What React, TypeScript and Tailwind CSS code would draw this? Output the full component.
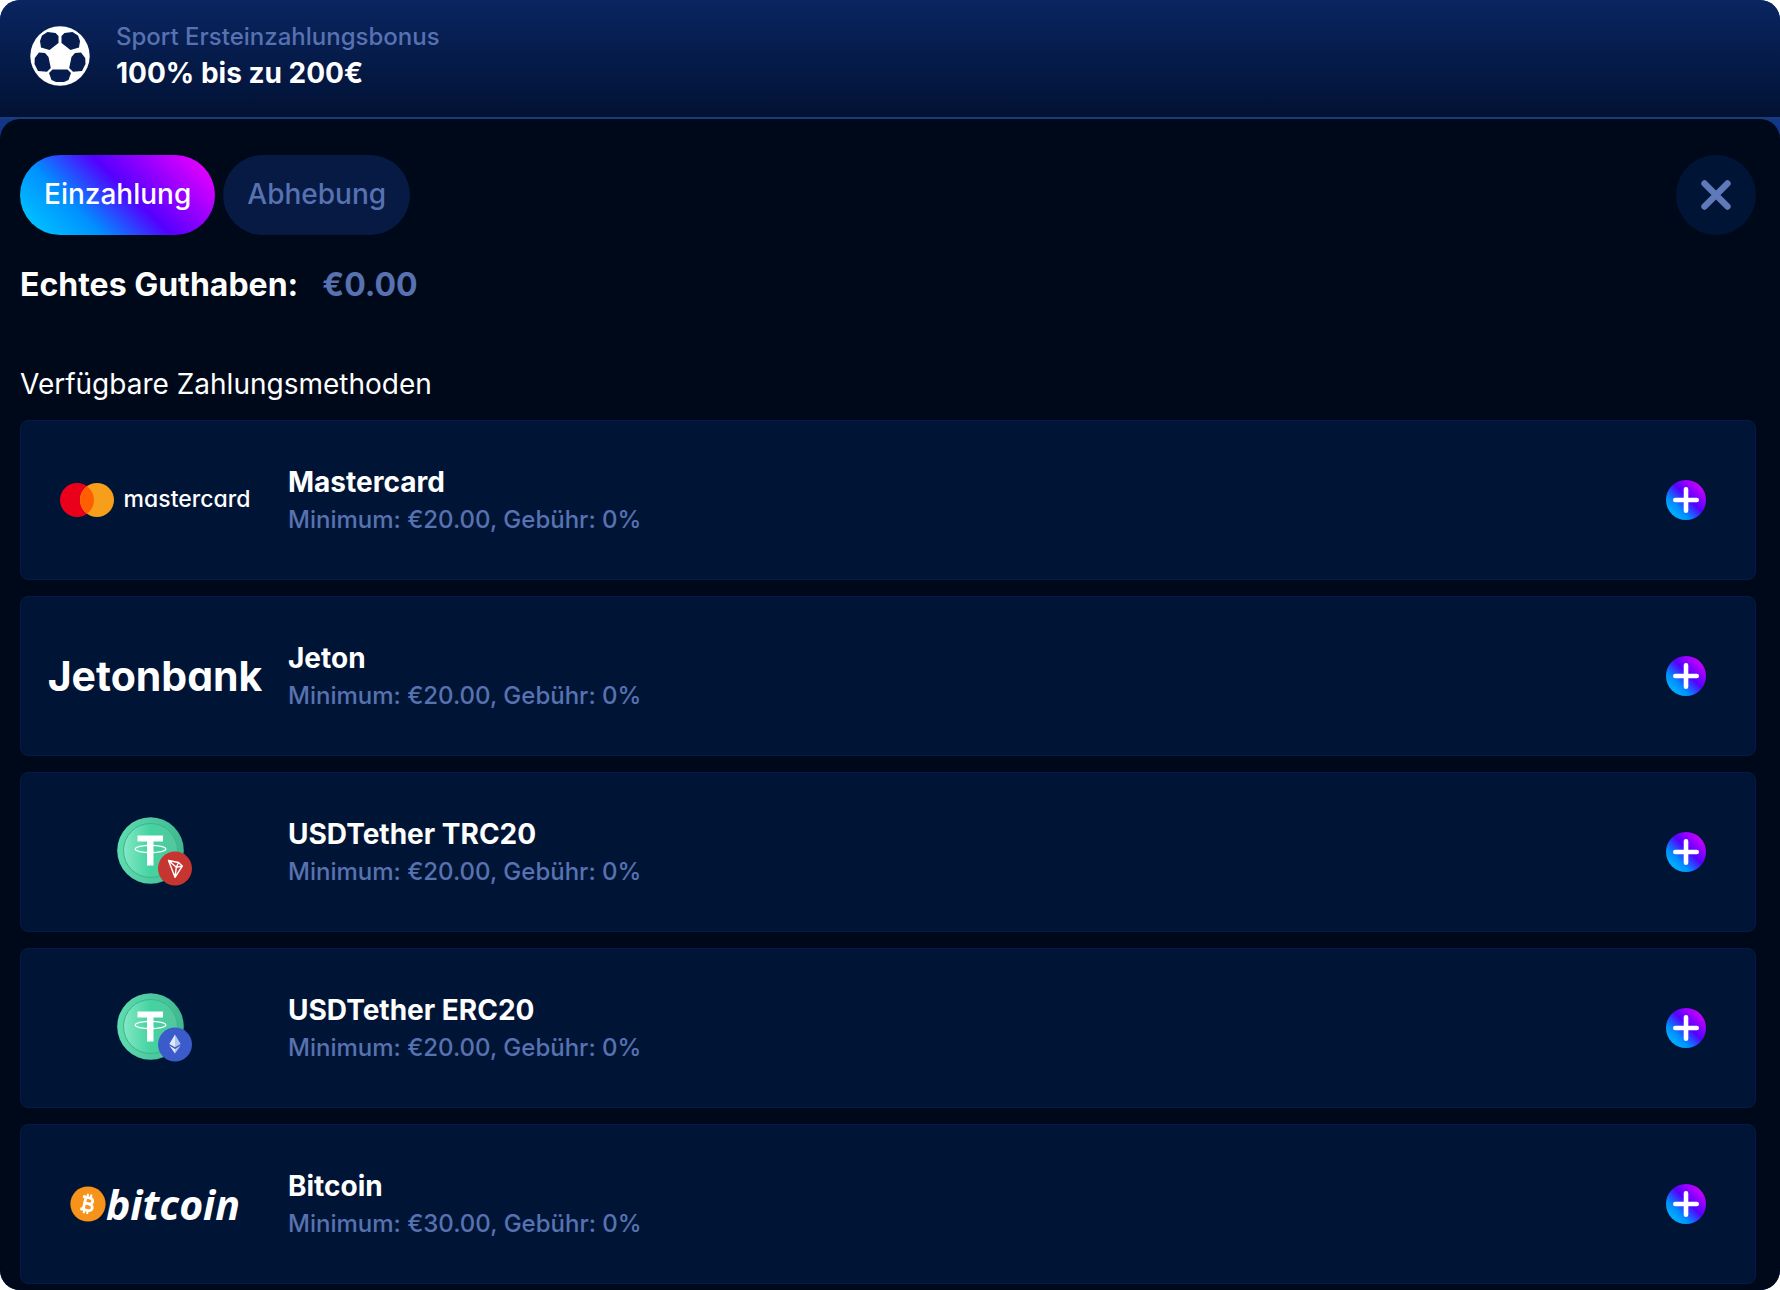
import { memo } from 'react';
import type { ReactNode } from 'react';

interface PaymentMethod {
  name: string;
  minimum: string;
  logo: ReactNode;
}

const SoccerBall = () => (
  <svg viewBox="0 0 60 60" className="w-[60px] h-[60px] shrink-0" aria-hidden="true">
    <circle cx="30" cy="30" r="29.7" fill="#fff" />
    <g fill="#061c4f">
      <path d="M12 9.5 L17.5 6 L25.5 7 L28.5 10 V17 L19.5 24 L11 21.5 L10 15 Z" />
      <path d="M48 9.5 L42.5 6 L34.5 7 L31.5 10 V17 L40.5 24 L49 21.5 L50 15 Z" />
      <path d="M9 26.5 L15 27 L18.5 31 L20.8 42 L17 45.8 L8 45 L4.5 38 L4.8 32 Z" />
      <path d="M51 26.5 L45 27 L41.5 31 L39.2 42 L43 45.8 L52 45 L55.5 38 L55.2 32 Z" />
      <path d="M22.5 43.5 H37.5 L41 47 L38.5 54 L34 56 H26 L21.5 54 L19 47 Z" />
    </g>
  </svg>
);

const MastercardLogo = () => (
  <div className="flex items-center gap-[10px]">
    <svg viewBox="0 0 54 34" className="w-[54px] h-[34px]" aria-hidden="true">
      <circle cx="17" cy="17" r="17" fill="#eb001b" />
      <circle cx="37" cy="17" r="17" fill="#f79e1b" />
      <path d="M27 3.25 A17 17 0 0 1 27 30.75 A17 17 0 0 1 27 3.25 Z" fill="#ff5f00" />
    </svg>
    <span className="pb-[2px] text-[23px] leading-8 font-medium text-white [font-feature-settings:'cv11']">mastercard</span>
  </div>
);

const JetonbankLogo = () => (
  <span className="text-[41px] leading-[48px] font-bold text-white [font-feature-settings:'cv11']">Jetonbank</span>
);

const TetherLogo = ({ id, children }: { id: string; children: ReactNode }) => (
  <svg viewBox="0 0 76 70" className="w-[76px] h-[70px]" aria-hidden="true">
    <defs>
      <linearGradient id={`${id}-rim`} x1="0" y1="0" x2="1" y2="0">
        <stop offset="0" stopColor="#5fdcb0" />
        <stop offset="1" stopColor="#3fb890" />
      </linearGradient>
      <linearGradient id={`${id}-face`} x1="0" y1="0" x2="1" y2="0">
        <stop offset="0" stopColor="#84e8c6" />
        <stop offset="0.5" stopColor="#43d3a0" />
        <stop offset="1" stopColor="#54c69f" />
      </linearGradient>
    </defs>
    <circle cx="33.5" cy="33.5" r="33.3" fill={`url(#${id}-rim)`} />
    <circle cx="33.5" cy="33.5" r="27" fill={`url(#${id}-face)`} stroke="#3fb38b" />
    <path d="M20.5 18.5 H46 V24.5 H36.5 V48.5 H30 V24.5 H20.5 Z" fill="#fff" />
    <ellipse cx="33.5" cy="32" rx="15.3" ry="3.6" fill="none" stroke="#fff" strokeWidth="1.3" />
    {children}
  </svg>
);

const TronBadge = () => (
  <>
    <circle cx="58" cy="51.5" r="17" fill="#c63530" />
    <path d="M51.5 43.5 L61.5 45.5 L65.3 49 L58 60.3 Z M51.5 43.5 L59.3 50.3 L58 60.3 M59.3 50.3 L65.3 49 M59.3 50.3 L61.5 45.5" fill="none" stroke="#fff" strokeWidth="1.4" strokeLinejoin="round" />
  </>
);

const EthereumBadge = () => (
  <>
    <circle cx="58" cy="51.5" r="17" fill="#3a5bc9" />
    <path d="M58 41.5 L52.3 51 L58 54.2 Z" fill="#e2e8fa" />
    <path d="M58 41.5 L63.7 51 L58 54.2 Z" fill="#b3c1ed" />
    <path d="M52.3 52.5 L58 60.5 V56 Z" fill="#e2e8fa" />
    <path d="M63.7 52.5 L58 60.5 V56 Z" fill="#b3c1ed" />
  </>
);

const BitcoinLogo = () => (
  <div className="flex items-center">
    <svg viewBox="0 0 36 36" className="w-[36px] h-[36px]" aria-hidden="true">
      <circle cx="18" cy="18" r="17.6" fill="#f7931a" />
      <g transform="rotate(13 18 18)" fill="none" stroke="#fff">
        <path d="M14.5 11.7 V24.3 M11.5 11.7 H19 a3 3 0 0 1 0 6 H14.5 M19 17.9 h0.8 a3.2 3.2 0 0 1 0 6.4 H11.5" strokeWidth="2.8" />
        <path d="M15.8 8 V12 M19.3 8 V12 M15.8 24 V28 M19.3 24 V28" strokeWidth="2" />
      </g>
    </svg>
    <span className="font-['Open_Sans',sans-serif] text-[41px] leading-[48px] font-bold italic text-white">bitcoin</span>
  </div>
);

const methods: PaymentMethod[] = [
  { name: 'Mastercard', minimum: '€20.00', logo: <MastercardLogo /> },
  { name: 'Jeton', minimum: '€20.00', logo: <JetonbankLogo /> },
  { name: 'USDTether TRC20', minimum: '€20.00', logo: <TetherLogo id="trc"><TronBadge /></TetherLogo> },
  { name: 'USDTether ERC20', minimum: '€20.00', logo: <TetherLogo id="erc"><EthereumBadge /></TetherLogo> },
  { name: 'Bitcoin', minimum: '€30.00', logo: <BitcoinLogo /> },
];

const PaymentCard = memo(({ method }: { method: PaymentMethod }) => (
  <li className="flex items-center h-40 pl-[25px] pr-[49px] rounded-lg border border-[#04194a] bg-[#001536]">
    <div className="flex justify-center w-[218px] shrink-0">{method.logo}</div>
    <div className="flex-1 ml-6 pt-[2px]">
      <h3 className="text-[28px] leading-[38px] font-bold text-white">{method.name}</h3>
      <p className="text-[24px] leading-[38px] font-medium text-[#5872b1]">Minimum: {method.minimum}, Gebühr: 0%</p>
    </div>
    <button
      type="button"
      aria-label={`${method.name} hinzufügen`}
      className="flex items-center justify-center w-10 h-10 rounded-full bg-[linear-gradient(45deg,#00d0ff_0%,#0090ff_30%,#5400ff_55%,#ff00ff_100%)]"
    >
      <svg viewBox="0 0 40 40" className="w-10 h-10" aria-hidden="true">
        <path d="M20 9.3 V30.7 M9.3 20 H30.7" stroke="#fff" strokeWidth="4.6" strokeLinecap="round" />
      </svg>
    </button>
  </li>
));

PaymentCard.displayName = 'PaymentCard';

export default function App() {
  return (
    <div className="overflow-hidden rounded-[20px] bg-[#12378a] font-['Inter',sans-serif]">
      <header className="flex items-start pt-[19px] pb-[26px] pl-[30px] border-b-2 border-[#1c3b78] bg-linear-to-b from-[#0a2561] to-[#021234]">
        <div className="pt-[7px]">
          <SoccerBall />
        </div>
        <div className="ml-[26px]">
          <p className="text-[24px] leading-9 font-medium text-[#5872b1]">Sport Ersteinzahlungsbonus</p>
          <p className="text-[28px] leading-9 font-bold text-white">100% bis zu 200€</p>
        </div>
      </header>

      <main className="pt-9 pb-[6px] pl-5 pr-6 rounded-t-[20px] bg-[#00091a]">
        <div className="flex items-center gap-2">
          <button
            type="button"
            className="h-20 px-6 pb-[2px] rounded-full text-[28px] font-medium text-white bg-[linear-gradient(45deg,#00d0ff_0%,#0090ff_30%,#5400ff_55%,#ff00ff_100%)]"
          >
            Einzahlung
          </button>
          <button type="button" className="h-20 px-6 pb-[2px] rounded-full text-[28px] font-medium text-[#5872b1] bg-[#061a44]">
            Abhebung
          </button>
          <button
            type="button"
            aria-label="Schließen"
            className="flex items-center justify-center w-20 h-20 ml-auto rounded-full bg-[#001536]"
          >
            <svg viewBox="0 0 32 32" className="w-8 h-8" aria-hidden="true">
              <path d="M4.5 4.5 L27.5 27.5 M27.5 4.5 L4.5 27.5" stroke="#6079b9" strokeWidth="6.4" strokeLinecap="round" />
            </svg>
          </button>
        </div>

        <p className="flex gap-6 mt-[30px] text-[32px] leading-10 font-bold">
          <span className="text-white">Echtes Guthaben:</span>
          <span className="text-[#5872b1]">€0.00</span>
        </p>

        <h2 className="mt-[59px] text-[28px] leading-10 font-normal text-white">Verfügbare Zahlungsmethoden</h2>

        <ul className="flex flex-col gap-4 mt-4">
          {methods.map((method) => (
            <PaymentCard key={method.name} method={method} />
          ))}
        </ul>
      </main>
    </div>
  );
}
